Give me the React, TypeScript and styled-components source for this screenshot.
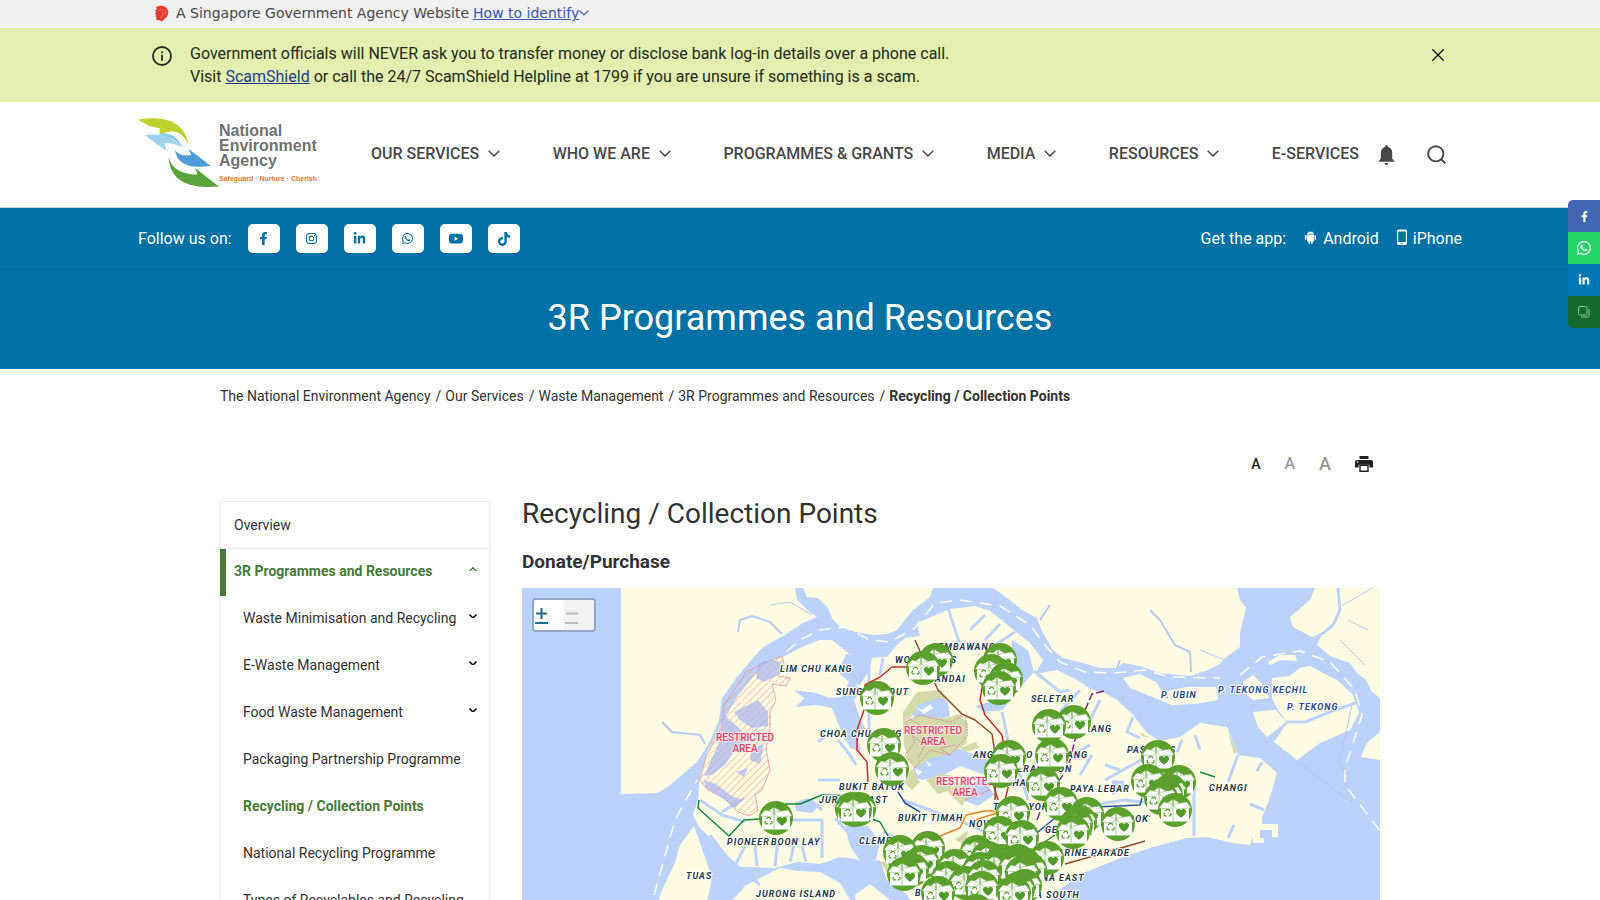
import React from "react";
import styled, { createGlobalStyle } from "styled-components";
import { FaFacebookF, FaLinkedinIn, FaTiktok } from "react-icons/fa";
import { BsInstagram, BsWhatsapp, BsYoutube } from "react-icons/bs";
import { AiFillAndroid } from "react-icons/ai";

const GlobalStyle = createGlobalStyle`
  * { box-sizing: border-box; }
  body {
    margin: 0;
    background: #fff;
    color: #323232;
    font-family: Roboto, "Liberation Sans", sans-serif;
    font-size: 16px;
  }
  a { color: inherit; text-decoration: none; }
  button { border: 0; padding: 0; background: none; font: inherit; color: inherit; cursor: pointer; }
  svg { display: block; }
`;

/* ---------- Government banner ---------- */

const GovBar = styled.div`
  background: #f0f0f0;
  height: 28px;
`;

const GovInner = styled.div`
  max-width: 1292px;
  height: 100%;
  margin: 0 auto;
  display: flex;
  align-items: center;
  font-family: "DejaVu Sans", sans-serif;
  font-size: 14px;
  line-height: 20px;
  color: #484848;
  padding-bottom: 2px;
`;

const GovText = styled.span`
  margin: 0 4px 0 7px;
`;

const IdentifyButton = styled.button`
  display: flex;
  align-items: center;
  color: #3b56b8;
  span { text-decoration: underline; }
`;

const Alert = styled.section`
  background: #e4eeae;
`;

const AlertInner = styled.div`
  max-width: 1296px;
  margin: 0 auto;
  padding: 14px 2px 14px 0;
  display: flex;
  align-items: flex-start;
  color: #222b1c;
`;

const AlertIcon = styled.div`
  margin: 4px 18px 0 0;
`;

const AlertText = styled.p`
  margin: 0;
  flex: 1;
  line-height: 23px;
  a { color: #1c3f94; text-decoration: underline; }
`;

const CloseButton = styled.button`
  margin: 7px 2px 0 0;
`;

/* ---------- Header ---------- */

const Header = styled.header`
  border-bottom: 1px solid #b9d6e4;
`;

const Wide = styled.div`
  max-width: 1324px;
  margin: 0 auto;
  display: flex;
  align-items: center;
`;

const HeaderInner = styled(Wide)`
  height: 105px;
  padding-bottom: 4px;
`;

const Logo = styled.a`
  display: flex;
  margin-right: 54px;
`;

const LogoText = styled.span`
  display: flex;
  flex-direction: column;
  padding-top: 5px;
  font: bold 16px/15px "Liberation Sans", sans-serif;
  color: #6f7174;
  small { margin-top: 6px; font-size: 7px; line-height: 10px; color: #e8743a; white-space: nowrap; }
`;

const Nav = styled.nav`
  flex: 1;
  display: flex;
  justify-content: space-between;
  margin-top: 2px;
`;

const NavButton = styled.button`
  display: flex;
  align-items: center;
  gap: 9px;
  font-weight: 500;
  line-height: 24px;
  color: #484848;
  white-space: nowrap;
`;

const HeaderTools = styled.div`
  display: flex;
  align-items: center;
  gap: 32px;
  margin: 4px 16px 0 19px;
  color: #484848;
`;

/* ---------- Blue band ---------- */

const Band = styled.div`
  background: #0071a4;
  color: #fff;
`;

const SocialRow = styled.div`
  border-bottom: 1px solid #02699a;
`;

const SocialInner = styled(Wide)`
  height: 61px;
`;

const SocialLinks = styled.div`
  display: flex;
  gap: 16px;
  margin-left: 16px;
  flex: 1;
`;

const SocialLink = styled.a`
  width: 32px;
  height: 29px;
  border-radius: 5px;
  background: #fff;
  color: #0071a4;
  display: flex;
  align-items: center;
  justify-content: center;
`;

const AppLink = styled.a`
  display: flex;
  align-items: center;
  gap: 5px;
  margin-left: 17px;
  svg { margin-bottom: 3px; }
`;

const BandTitle = styled.div`
  padding: 24px 0 27px;
  text-align: center;
  font-size: 36px;
  line-height: 48px;
`;

/* ---------- Content ---------- */

const Main = styled.main`
  max-width: 1160px;
  margin: 0 auto;
`;

const Crumbs = styled.nav`
  padding-top: 16px;
  font-size: 14px;
  line-height: 22px;
  display: flex;
  span { margin: 0 4px 0 5px; }
`;

const PageTools = styled.div`
  display: flex;
  align-items: flex-end;
  justify-content: flex-end;
  height: 65px;
  padding-right: 7px;
  gap: 24px;
`;

const SizeButton = styled.button<{ $size: number; $on?: boolean }>`
  font-size: ${(p) => p.$size}px;
  line-height: 16px;
  font-weight: 500;
  color: ${(p) => (p.$on ? "#222" : "#999")};
`;

const Columns = styled.div`
  display: flex;
  align-items: flex-start;
  padding-top: 29px;
  gap: 32px;
`;

const Sidebar = styled.aside`
  width: 270px;
  flex: none;
  border: 1px solid #f0f0f0;
  box-shadow: 0 0 3px rgba(0, 0, 0, 0.06);
  font-size: 14px;
`;

const SideItem = styled.a<{ $sub?: boolean; $active?: boolean; $bar?: boolean; $line?: boolean }>`
  display: flex;
  align-items: center;
  justify-content: space-between;
  height: 47px;
  padding: 0 12px ${(p) => (p.$line ? 0 : 4)}px ${(p) => (p.$bar ? 8 : p.$sub ? 22 : 13)}px;
  border-bottom: ${(p) => (p.$line ? "1px solid #e8e8e8" : "0")};
  border-left: ${(p) => (p.$bar ? "6px solid #467a36" : "0")};
  margin-left: ${(p) => (p.$bar ? -1 : 0)}px;
  font-weight: ${(p) => (p.$active ? 700 : 400)};
  color: ${(p) => (p.$active ? "#467a36" : "#323232")};
  svg { margin-bottom: 3px; }
`;

const Article = styled.article`
  flex: 1;
  min-width: 0;
`;

const Title = styled.h1`
  margin: -3px 0 0;
  font-size: 28px;
  line-height: 32px;
  font-weight: 400;
`;

const Subtitle = styled.h2`
  margin: 21px 0 16px;
  font-size: 19px;
  line-height: 21px;
  font-weight: 700;
`;

const MapFrame = styled.div`
  position: relative;
  > svg { width: 100%; height: auto; }
`;

const ZoomBox = styled.div`
  position: absolute;
  left: 10px;
  top: 10px;
  width: 64px;
  height: 34px;
  border: 2px solid #93a6c8;
  border-radius: 4px;
  display: flex;
  background: #f1f1f1;
  overflow: hidden;
`;

const ZoomButton = styled.button<{ $off?: boolean }>`
  width: 50%;
  height: 100%;
  padding-left: 1px;
  background: ${(p) => (p.$off ? "#f1f1f1" : "#fff")};
  color: ${(p) => (p.$off ? "#bdbdbd" : "#1f6f8b")};
`;

/* ---------- Share rail ---------- */

const ShareRail = styled.div`
  position: fixed;
  right: 0;
  top: 200px;
  width: 32px;
  border-radius: 5px 0 0 5px;
  overflow: hidden;
`;

const ShareButton = styled.button<{ $bg: string }>`
  display: flex;
  width: 32px;
  height: 32px;
  align-items: center;
  justify-content: center;
  color: #fff;
  background: ${(p) => p.$bg};
`;

/* ---------- Drawings ---------- */

const Chevron = ({ w = 12, up = false, stroke = 1.5, color = "currentColor" }) => (
  <svg width={w} height={(w * 7) / 12} viewBox="0 0 12 7" fill="none" stroke={color} strokeWidth={stroke} aria-hidden>
    <path d={up ? "M.7 6.2 6 1l5.3 5.2" : "M.7.8 6 6 11.3.8"} />
  </svg>
);

const Lion = () => (
  <svg width="15" height="17" viewBox="0 0 15 17" aria-hidden>
    <path
      d="M1.800 2.200C4.500.8 8 .2 10.500 1.400c3 1.400 4.300 4 3.700 7-.5 2.600-2 3.600-3.200 5.200-1 1.500-2.200 2.500-4 2.800L5.600 15l-2.200.3-1.500-1.400.9-1.600-1.200-1 .7-1.500-1.500-.6 1.500-2.400L.7 5l2.300-.8z"
      fill="#e8392f"
    />
    <path d="M4.500 5.500c1.800-.9 3.400-.8 4.500.2M8.500 7.500c1 2-.5 4.500-2.500 6M11 4.500c1.200 1.500 1.200 3.500.2 5" stroke="#f3847c" strokeWidth=".8" fill="none" />
  </svg>
);

const LeafMark = () => (
  <svg width="81" height="70" viewBox="0 0 82 70" aria-hidden>
    <path d="M0 1C25-3 48 2 51 27 46 14 36 9 22 17V10C14 9 7 6 0 1z" fill="#bed22f" />
    <path d="M22 15c12-1 20 5 23 15-5-7-12-11-23-13z" fill="#8cc8ea" />
    <path d="M7 17C20 15 33 17 44 29 38 26 33 25 27 25l2 8C20 27 14 22 7 17z" fill="#9fd2ef" />
    <path d="M37 32c5 6 11 6 17 5l-3-6c9 6 15 12 23 17-12 2-27 2-34-8z" fill="#4d9bd8" />
    <path d="M31 39c3 11 11 17 29 18l-2-7c8 7 16 13 24 19-22 2-50-1-51-30z" fill="#5aa53a" />
  </svg>
);

const Phone = () => (
  <svg width="12" height="17" viewBox="0 0 12 17" aria-hidden>
    <rect x="1.600" y="1" width="8.800" height="14.400" rx="1.200" fill="none" stroke="#fff" strokeWidth="1.200" />
    <path d="M1.600 1h8.800v1.500H1.600zM1.600 13h8.800v2.400H1.600z" fill="#fff" />
    <circle cx="6" cy="14.200" r=".7" fill="#0071a4" />
  </svg>
);

const Printer = () => (
  <svg width="18" height="16" viewBox="0 0 18 16" aria-hidden>
    <path d="M4.500 0h9v3h-9zM2 4h14a2 2 0 0 1 2 2v5.500h-3.600V8.800H3.600v2.700H0V6a2 2 0 0 1 2-2z" fill="#222" />
    <path d="M5 9.300h8v5.900H5z" fill="#fff" stroke="#222" strokeWidth="1.400" />
    <circle cx="2.500" cy="6" r=".8" fill="#fff" />
  </svg>
);

/* ---------- Map ---------- */

const MapLabel = styled.text`
  font: italic 700 9px Roboto, sans-serif;
  letter-spacing: 1px;
  paint-order: stroke;
  stroke: #fff;
  stroke-width: 2px;
  stroke-linejoin: round;
`;

const AreaLabel = styled.text`
  font: 500 10px/11px Roboto, sans-serif;
  text-anchor: middle;
  fill: #dd4560;
  paint-order: stroke;
  stroke: #fbe6ea;
  stroke-width: 2px;
`;

const places: [string, number, number][] = [
  ["LIM CHU KANG", 780, 672], ["SUNGEI KADUT", 836, 695], ["WOODLANDS", 895, 663], ["SEMBAWANG", 932, 650],
  ["MANDAI", 926, 682], ["CHOA CHU KANG", 820, 737], ["BUKIT BATOK", 839, 790], ["JURONG EAST", 819, 803],
  ["BUKIT TIMAH", 898, 821], ["PIONEER", 727, 845], ["BOON LAY", 771, 845], ["CLEMENTI", 859, 844],
  ["TUAS", 686, 879], ["JURONG ISLAND", 756, 897], ["SELETAR", 1031, 702], ["SENGKANG", 1058, 732],
  ["HOUGANG", 1039, 758], ["SERANGOON", 1011, 772], ["ANG MO KIO", 973, 758], ["BISHAN", 996, 786],
  ["TOA PAYOH", 993, 810], ["NOVENA", 969, 827], ["GEYLANG", 1045, 833], ["PAYA LEBAR", 1070, 792],
  ["BEDOK", 1116, 822], ["MARINE PARADE", 1049, 856], ["MARINA EAST", 1016, 881], ["MARINA SOUTH", 1003, 898],
  ["PASIR RIS", 1127, 753], ["CHANGI", 1209, 791], ["BUKIT MERAH", 915, 896],
];

const islands: [string, number, number][] = [["P. UBIN", 1161, 698], ["P. TEKONG KECHIL", 1218, 693], ["P. TEKONG", 1287, 710]];

const pins: [number, number][] = [
  [936, 660], [923, 668], [1000, 660], [991, 671], [1006, 679], [999, 688], [877, 698], [884, 745], [892, 769],
  [859, 809], [852, 809], [855, 810], [776, 818], [1074, 722], [1049, 726], [1052, 755], [1009, 757], [1001, 771],
  [1043, 784], [1061, 804], [1087, 814], [1080, 822], [1076, 825], [1073, 832], [1118, 824], [1013, 813],
  [1000, 833], [1022, 837], [1047, 858], [928, 848], [900, 852], [922, 862], [912, 870], [904, 874],
  [977, 852], [988, 858], [1002, 861], [1018, 861], [955, 866], [1024, 864], [980, 869], [996, 867], [1016, 867],
  [948, 878], [1030, 870], [1022, 873], [966, 883], [984, 877], [1025, 886], [982, 888], [938, 893], [1018, 889],
  [1014, 893], [976, 911], [1158, 757], [1179, 782], [1148, 781], [1170, 791], [1166, 795], [1161, 798], [1175, 810],
];

const Pin = ({ x, y }: { x: number; y: number }) => (
  <g transform={`translate(${x} ${y})`}>
    <circle r="17" fill="#5b9f2d" />
    <path d="M-14-5H14V11.500H-14z" fill="#fff" />
    <path d="M-12-4-2-11V-4zM-2-11 10-4H-2z" fill="#fff" stroke="#5b9f2d" strokeWidth=".6" />
    <path d="M-16-2-11-8-2-5.500-5-1zM16-2 12-8-2-5.500 2-1z" fill="#fff" stroke="#8dbd69" strokeWidth=".6" />
    <path d="M-2-5V12" stroke="#a5cc88" strokeWidth="1" />
    <path d="M-9.600 1.200-8.200-.6h1.800L-5 1.400M-4.400 3l.6 1.600-1 1.300H-6.500M-8.300 5.900h-1.900l-.9-1.400.8-1.700" stroke="#5b9f2d" strokeWidth="1.200" fill="none" />
    <path d="M6 7.800C2 4.700 .8 3 1 1 1.400-1.200 4.600-1.700 6 .6 7.500-1.700 10.800-1.200 11 1 11.200 3 10 4.700 6 7.800z" fill="#4f9a2a" />
  </g>
);

const SEA = "#bdd2fa";
const LAND = "#fefde3";

const IslandMap = () => (
  <svg viewBox="522 588 858 600" role="img" aria-label="Map of donation and collection points">
    <defs>
      <pattern id="hatch" width="5" height="5" patternUnits="userSpaceOnUse" patternTransform="rotate(45)">
        <path d="M0 0V5" stroke="#f0a08c" strokeWidth="1.200" />
      </pattern>
    </defs>
    <rect x="522" y="588" width="858" height="600" fill={SEA} />
    <g fill={LAND}>
      <path d="M621 588H795L797 600 810 612 817 617 803 623 783 636 765 646 760 650 753 658 737 677 722 698 719 720 709 743 697 762 670 785 658 793 621 794z" />
      <path d="M803 588 807 597 818 598 828 608 832 618 840 627 856 632 873 635 887 634 897 630 913 610 930 597 933 588z" />
      <path d="M993 588 1010 600 1022 610 1037 618 1043 633 1053 650 1063 658 1083 663 1100 668 1117 668 1123 663 1140 666 1160 673 1190 676 1208 670 1220 664 1225 658 1240 647 1240 633 1246 608 1240 600 1237 588z" />
      <path d="M1315 588 1310 600 1290 617 1293 627 1312 637 1323 632 1317 645 1330 656 1350 663 1356 672 1366 680 1372 692 1380 698V588z" />
      <path d="M1380 732 1367 743 1361 757 1380 760z" />
      <path d="M1272 678 1290 676 1300 668 1310 666 1325 674 1337 680 1353 695 1359 713 1350 730 1320 743 1297 760 1274 742 1287 723 1277 708 1272 698z" />
      <path d="M1253 712 1276 710 1286 722 1267 737 1258 727z" />
      <path d="M1243 682 1253 675 1261 683 1269 698 1253 700 1245 693z" />
      <path d="M1268 662 1280 655 1295 655 1297 661 1280 660 1270 665z" />
      <path d="M1123 678 1140 674 1156 682 1163 692 1187 687 1216 687 1218 700 1195 704 1172 705 1150 696 1130 688z" />
      <path d="M783 657 802 647 820 640 832 640 853 657 867 658 887 657 897 645 905 638 920 636 917 623 950 609 975 606 990 611 1010 627 1030 643 1043 660 1035 674 1057 670 1077 680 1092 690 1103 692 1117 700 1133 715 1147 733 1160 741 1180 737 1200 723 1227 727 1238 755 1260 758 1277 773 1270 797 1262 818V824H1278V837H1264V843H1253V837L1250 845 1233 843 1207 837 1187 838 1153 847 1123 857 1083 873 1063 887 1050 900 1040 925H930L905 893 887 880 880 860 868 862 850 858 840 857 820 864 797 862 775 868 753 867 733 867 720 847 700 828 693 815 698 800 700 777 707 753 720 727 737 697 753 677 767 660z" />
      <path d="M694 826 700 843 712 878 705 910H655L663 888 675 863 680 845z" />
      <path d="M733 900 745 886 760 878 780 868 797 871 820 872 840 883 853 905 850 930H733z" />
      <path d="M870 884 890 900 905 925H860L855 895z" />
    </g>
    <g fill={SEA}>
      <path d="M846 654 873 656 868 672 860 685 850 683 838 672z" />
      <path d="M794 690 816 693 830 698 842 697 850 680 862 690 854 700 860 718 866 730 858 740 862 752 850 748 840 728 832 708 815 705 796 707 804 698z" />
      <path d="M1012 640 1028 650 1034 672 1018 690 1003 710 984 712 975 706 996 700 1010 680z" />
      <path d="M916 693 935 692 948 702 950 716 930 722 913 716 910 705z" />
      <path d="M915 765 935 755 957 748 978 756 993 763 985 775 960 766 942 776 922 780 910 776z" />
      <path d="M958 784 985 780 994 795 978 806 962 800z" />
      <path d="M1112 780 1124 781 1125 790 1112 795z" />
      <path d="M1260 830H1272V838H1260z" />
      <path d="M845 826 868 826 880 842 876 860 862 864 850 846z" />
      <path d="M795 802 808 798 820 805 812 813 796 811z" />
    </g>
    <g fill="none" stroke={SEA} strokeWidth="3" strokeLinejoin="round">
      <path d="M869 656V740M883 658 880 675M948 608 960 645M1000 624 985 640M1015 632 995 645M985 615 970 630M838 740 850 755 856 765M818 742 827 735" />
      <path d="M1002 712 1010 750 1022 780 1028 800M1034 671 1060 692 1070 690M1080 690 1060 712M1100 700 1085 730M1090 745 1072 755M1092 755 1080 775M1105 780 1150 755M1120 770 1105 765" />
      <path d="M1194 836V780M1238 755 1228 782M1262 762 1257 771M1250 804 1264 810M1234 825 1228 838M1195 735 1200 750M1182 740 1177 752M1133 717 1127 732 1140 738" />
      <path d="M734 868 745 846M757 866 755 846M775 866 778 840M790 862 795 840H800M806 862 802 846M822 858 822 820 770 820M847 832 835 818M818 780H840M795 806 815 806M744 798 722 812" />
      <path d="M697 832 760 885M710 835 735 868M903 800 970 825 990 835M883 832 900 840 930 842M1286 722 1305 722 1330 712 1358 702M1338 588 1340 610 1333 625 1322 634" />
      <path d="M1092 805 1125 800 1165 805M700 800 722 815 745 822M810 800 822 810" />
    </g>
    <g fill="none" stroke="#b5c9f2" strokeWidth="1">
      <path d="M738 632 740 620 752 616 770 622 782 634M662 722 672 732 700 735 705 744M1150 610 1160 620 1175 645 1190 652 1191 672M1040 620 1050 605M1120 660 1117 668" strokeWidth="2" />
      <path d="M770 605 790 602 812 615M1352 705 1340 760 1350 790 1352 803 1296 760M1372 588 1352 600 1342 605M1348 620 1368 630M1340 640 1365 665M1200 650 1225 660" />
    </g>
    <g fill="#d3dbab">
      <path d="M917 692 940 690 948 700 938 698 918 705 912 716 903 722 903 712z" />
      <path d="M903 722 920 716 945 718 960 714 968 724 966 744 950 754 930 758 916 768 908 760 904 745z" />
      <path d="M912 768 920 782 912 790 904 782zM926 780 940 774 955 776 950 790 938 794zM960 748 976 742 979 748 966 752zM1140 732 1150 738 1142 736zM1228 733 1238 752 1234 754zM955 840 968 830 966 845zM880 862 890 860 888 874z" />
      <path d="M946 790 960 784 972 788 962 806z" />
    </g>
    <path d="M766 662 782 656 784 664 778 676 790 678 786 686 772 684 776 700 770 712V730L766 748 770 770 762 790 755 795 758 810 750 816 738 812 724 798 708 790 700 780 706 757 722 725 724 705 746 672z" fill="url(#hatch)" stroke="#e88f98" strokeWidth=".8" />
    <g fill="#aeb7ec" opacity=".75">
      <path d="M758 664 770 659 780 662 786 670 776 676 764 682 756 678zM746 706 758 700 768 712V726L752 728 740 720 734 712zM724 715 736 725 748 738 735 750 725 765 712 775 704 776 718 745zM704 780 716 784 732 796 742 800 735 808 722 798 706 788zM736 772 748 768 744 777zM752 748 764 744 760 764 750 760z" />
    </g>
    <path d="M905 722 920 715 950 722 965 715 968 735 950 755 930 750 915 768 905 755 915 742z" fill="none" stroke="#dc8d94" strokeWidth="1" strokeDasharray="2 1" />
    <path d="M908 718 920 725 912 735 925 745 918 758M950 755 940 748 955 745M965 800 990 790 980 782" fill="none" stroke="#dc8d94" strokeWidth=".8" />
    <g fill="#fff" opacity=".9">
      <path d="M915 706 922 710 930 704 933 708 924 714zM915 768 922 772 918 776zM926 760 932 766 928 766z" />
    </g>
    <g fill="none" strokeWidth="1.500" strokeLinejoin="round">
      <path d="M699 800 698 808 729 836 744 820 776 818M785 804H800L822 795 858 796M855 812 880 822 888 836M950 860 940 866M1050 832 1150 816M1040 845 1055 835M1200 772 1215 777" stroke="#16863d" />
      <path d="M915 667 892 667 880 677 865 685 864 710 857 730 857 750 867 762 868 782M985 670 980 700 985 715 1002 735 1006 760 992 780 998 800M1010 780 1005 800" stroke="#c62f2b" />
      <path d="M915 640 924 660 938 690 950 702 962 714 975 720 992 734 996 760 995 800M1065 864 1090 857 1145 841" stroke="#8c4a2c" />
      <path d="M898 792 905 803 920 812M1095 807 1140 805 1142 798M1038 832 1055 818" stroke="#2c4faa" />
      <path d="M1104 691 1092 694 1086 708 1075 740 1068 768 1045 800 1036 822" stroke="#7b2482" strokeDasharray="8 3" />
      <path d="M935 838 960 828 966 815 985 811 1010 811M1000 812 975 820" stroke="#e58226" />
    </g>
    <g fill="none" stroke="#fff" strokeWidth="1.400" strokeDasharray="12 8">
      <path d="M654 895 675 820 697 780M786 652 800 640 820 630 845 627 870 640 890 642 915 628 935 603 960 600 1000 606 1030 625 1045 645 1060 662 1085 672 1115 673 1145 670 1170 677 1220 678M1240 675 1262 657 1300 651 1330 662 1355 690 1362 715 1345 768 1345 785 1380 831" />
    </g>
    <g fill="#243845">
      {places.map(([t, x, y]) => (
        <MapLabel key={t} x={x} y={y}>{t}</MapLabel>
      ))}
    </g>
    <g fill="#2b4a8d">
      {islands.map(([t, x, y]) => (
        <MapLabel key={t} x={x} y={y}>{t}</MapLabel>
      ))}
    </g>
    {[[745, 741], [933, 734], [965, 785]].map(([x, y]) => (
      <AreaLabel key={x} x={x} y={y}>
        <tspan x={x}>RESTRICTED</tspan>
        <tspan x={x} dy="11">AREA</tspan>
      </AreaLabel>
    ))}
    {pins.map(([x, y], i) => (
      <Pin key={i} x={x} y={y} />
    ))}
  </svg>
);

/* ---------- Page ---------- */

const menu = ["OUR SERVICES", "WHO WE ARE", "PROGRAMMES & GRANTS", "MEDIA", "RESOURCES"];

const social = [
  { name: "Facebook", icon: <FaFacebookF size={13} /> },
  { name: "Instagram", icon: <BsInstagram size={11} /> },
  { name: "LinkedIn", icon: <FaLinkedinIn size={13} /> },
  { name: "WhatsApp", icon: <BsWhatsapp size={11} /> },
  { name: "YouTube", icon: <BsYoutube size={14} /> },
  { name: "TikTok", icon: <FaTiktok size={14} /> },
];

const trail = ["The National Environment Agency", "Our Services", "Waste Management", "3R Programmes and Resources"];

const subItems = [
  { label: "Waste Minimisation and Recycling", more: true },
  { label: "E-Waste Management", more: true },
  { label: "Food Waste Management", more: true },
  { label: "Packaging Partnership Programme" },
  { label: "Recycling / Collection Points", active: true },
  { label: "National Recycling Programme" },
  { label: "Types of Recyclables and Recycling" },
];

export default function App() {
  return (
    <>
      <GlobalStyle />
      <GovBar>
        <GovInner>
          <Lion />
          <GovText>A Singapore Government Agency Website</GovText>
          <IdentifyButton>
            <span>How to identify</span>
            <Chevron w={10} />
          </IdentifyButton>
        </GovInner>
      </GovBar>
      <Alert>
        <AlertInner>
          <AlertIcon>
            <svg width="20" height="20" viewBox="0 0 20 20" aria-hidden>
              <circle cx="10" cy="10" r="9" fill="none" stroke="#222b1c" strokeWidth="1.800" />
              <path d="M9.100 5.200h1.800v1.900H9.100zM9.100 8.700h1.800v6H9.100z" fill="#222b1c" />
            </svg>
          </AlertIcon>
          <AlertText>
            Government officials will NEVER ask you to transfer money or disclose bank log-in details over a phone call.
            <br />
            Visit <a href="#scamshield">ScamShield</a> or call the 24/7 ScamShield Helpline at 1799 if you are unsure if
            something is a scam.
          </AlertText>
          <CloseButton aria-label="Close">
            <svg width="12" height="12" viewBox="0 0 12 12" stroke="#111" strokeWidth="1.300" aria-hidden>
              <path d="M.3.300 11.700 11.700M11.700.300.300 11.700" />
            </svg>
          </CloseButton>
        </AlertInner>
      </Alert>
      <Header>
        <HeaderInner>
          <Logo href="#home">
            <LeafMark />
            <LogoText>
              <span>National</span>
              <span>Environment</span>
              <span>Agency</span>
              <small>Safeguard · Nurture · Cherish</small>
            </LogoText>
          </Logo>
          <Nav>
            {menu.map((m) => (
              <NavButton key={m}>
                {m}
                <Chevron />
              </NavButton>
            ))}
            <NavButton>E-SERVICES</NavButton>
          </Nav>
          <HeaderTools>
            <button aria-label="Notifications">
              <svg width="17" height="20" viewBox="0 0 16 19" fill="currentColor" aria-hidden>
                <path d="M7 1a1 1 0 0 1 2 0l.3.600C12 2.500 13.400 4.600 13.400 7.500v5.300L15.800 16H.2l2.400-3.200V7.500c0-2.900 1.400-5 4.100-5.900zM6.200 17h3.600a1.800 1.800 0 0 1-3.600 0z" />
              </svg>
            </button>
            <button aria-label="Search">
              <svg width="19" height="19" viewBox="0 0 19 19" fill="none" stroke="currentColor" strokeWidth="1.900" aria-hidden>
                <circle cx="8.800" cy="8.800" r="7.600" />
                <path d="m14 14 4.300 4.300" />
              </svg>
            </button>
          </HeaderTools>
        </HeaderInner>
      </Header>
      <Band>
        <SocialRow>
          <SocialInner>
            Follow us on:
            <SocialLinks>
              {social.map((s) => (
                <SocialLink key={s.name} href={"#" + s.name} aria-label={s.name}>
                  {s.icon}
                </SocialLink>
              ))}
            </SocialLinks>
            Get the app:
            <AppLink href="#android">
              <AiFillAndroid size={15} />
              Android
            </AppLink>
            <AppLink href="#iphone">
              <Phone />
              iPhone
            </AppLink>
          </SocialInner>
        </SocialRow>
        <BandTitle>3R Programmes and Resources</BandTitle>
      </Band>
      <Main>
        <Crumbs aria-label="Breadcrumb">
          {trail.map((t) => (
            <React.Fragment key={t}>
              <a href="#trail">{t}</a>
              <span>/</span>
            </React.Fragment>
          ))}
          <b>Recycling / Collection Points</b>
        </Crumbs>
        <PageTools>
          <SizeButton $size={14} $on aria-label="Small text">A</SizeButton>
          <SizeButton $size={16} aria-label="Medium text">A</SizeButton>
          <SizeButton $size={18} aria-label="Large text">A</SizeButton>
          <button aria-label="Print">
            <Printer />
          </button>
        </PageTools>
        <Columns>
          <Sidebar>
            <SideItem href="#overview" $line>Overview</SideItem>
            <SideItem href="#3r" $active $bar>
              3R Programmes and Resources
              <Chevron w={8} up stroke={2} />
            </SideItem>
            {subItems.map((s) => (
              <SideItem key={s.label} href="#item" $sub $active={s.active}>
                {s.label}
                {s.more && <Chevron w={8} stroke={2.4} color="#111" />}
              </SideItem>
            ))}
          </Sidebar>
          <Article>
            <Title>Recycling / Collection Points</Title>
            <Subtitle>Donate/Purchase</Subtitle>
            <MapFrame>
              <IslandMap />
              <ZoomBox>
                <ZoomButton aria-label="Zoom in">
                  <svg width="14" height="24" viewBox="0 0 14 24" fill="none" stroke="currentColor" strokeWidth="2" aria-hidden>
                    <path d="M1 10.500h11M6.500 5v11M0 20h13" />
                  </svg>
                </ZoomButton>
                <ZoomButton $off aria-label="Zoom out">
                  <svg width="14" height="24" viewBox="0 0 14 24" fill="none" stroke="currentColor" strokeWidth="2" aria-hidden>
                    <path d="M1 10.500h12M0 20h13" />
                  </svg>
                </ZoomButton>
              </ZoomBox>
            </MapFrame>
          </Article>
        </Columns>
      </Main>
      <ShareRail>
        <ShareButton $bg="#4267b2" aria-label="Share on Facebook"><FaFacebookF size={11} /></ShareButton>
        <ShareButton $bg="#25d366" aria-label="Share on WhatsApp"><BsWhatsapp size={14} /></ShareButton>
        <ShareButton $bg="#0077b5" aria-label="Share on LinkedIn"><FaLinkedinIn size={12} /></ShareButton>
        <ShareButton $bg="#126b2c" aria-label="Copy link">
          <svg width="12" height="12" viewBox="0 0 12 12" fill="none" stroke="#8fbf9c" aria-hidden>
            <rect x=".500" y=".500" width="8.500" height="8.500" rx="1.500" />
            <path d="M11 3v6.500A1.500 1.500 0 0 1 9.500 11H3" />
          </svg>
        </ShareButton>
      </ShareRail>
    </>
  );
}
